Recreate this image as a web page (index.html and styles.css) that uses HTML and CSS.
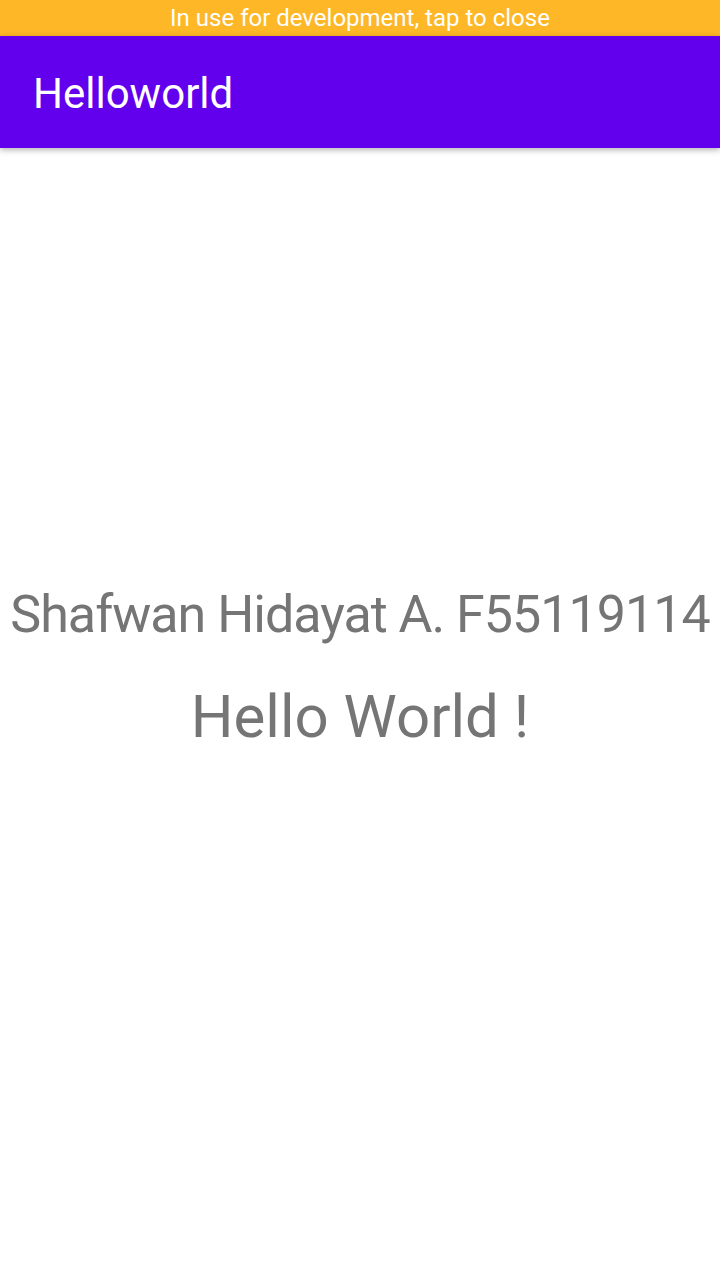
FILE: index.html
```html
<!DOCTYPE html>
<html>
<head>
<meta charset="utf-8">
<link rel="stylesheet" href="styles.css">
</head>
<body>
<div class="screen">
  <div class="devbar">In use for development, tap to close</div>
  <header class="appbar"><span class="title">Helloworld</span></header>
  <main class="content">
    <div class="name">Shafwan Hidayat A. F55119114</div>
    <div class="hello">Hello World !</div>
  </main>
</div>
</body>
</html>
```
FILE: styles.css
```css
html, body { margin: 0; padding: 0; }
body { font-family: Roboto, "Noto Sans", sans-serif; background: #fff; }
.screen { width: 720px; height: 1280px; display: flex; flex-direction: column; overflow: hidden; }
.devbar { height: 36px; background: #FEB726; color: #fff; font-size: 24px; line-height: 36px; text-align: center; flex: none; }
.appbar { height: 112px; box-sizing: border-box; padding: 3px 0 0 33px; background: #6200EE; display: flex; align-items: center; box-shadow: 0 2px 6px rgba(0,0,0,0.3); position: relative; z-index: 1; flex: none; }
.title { color: #fff; font-size: 42px; }
.content { flex: 1; display: flex; flex-direction: column; align-items: center; justify-content: center; color: #757575; padding-bottom: 92px; }
.name { font-size: 52px; line-height: 62px; letter-spacing: -1px; white-space: nowrap; }
.hello { font-size: 60px; line-height: 70px; margin-top: 36px; }
```
